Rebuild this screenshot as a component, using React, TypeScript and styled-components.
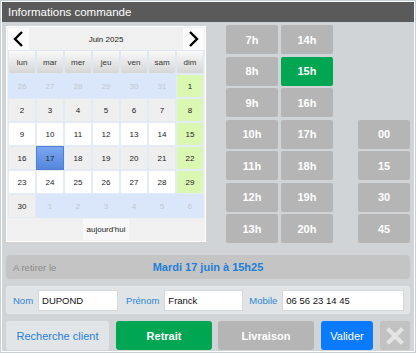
import styled, { createGlobalStyle } from "styled-components";

const GlobalStyle = createGlobalStyle`
  body {
    margin: 0;
    background: #ffffff;
    font-family: "Liberation Sans", Arial, sans-serif;
  }
`;

const Panel = styled.div`
  width: 416px;
  box-sizing: border-box;
  border: 1px solid #c6d0d7;
  padding: 1px;
  background: #ffffff;
`;

const Header = styled.div`
  height: 20px;
  line-height: 20px;
  background: #5a5a5a;
  color: #ffffff;
  font-size: 11.5px;
  padding-left: 6px;
`;

const Body = styled.div`
  background: #d0d4d7;
  padding: 3px 4px 1px 4px;
`;

const Top = styled.div`
  display: flex;
  align-items: flex-start;
`;

const Calendar = styled.div`
  width: 200px;
  box-sizing: border-box;
  margin-top: 1px;
  border: 1px solid #ffffff;
  padding: 1px;
  background: #f0f0f0;
`;

const Nav = styled.div`
  height: 22px;
  display: flex;
  align-items: center;
  justify-content: space-between;
`;

const Arrow = styled.div`
  width: 21px;
  height: 22px;
  background: #fbfbfb;
  display: flex;
  align-items: center;
  justify-content: center;
`;

const Month = styled.div`
  font-size: 8px;
  color: #222;
`;

const Grid = styled.div`
  display: grid;
  grid-template-columns: repeat(7, 28px);
  grid-auto-rows: 24px;
`;

const DayName = styled.div`
  box-sizing: border-box;
  border: 1px solid #dfe8f2;
  background: linear-gradient(#f9f9f9, #d6d6d6);
  font-size: 8px;
  color: #333;
  display: flex;
  align-items: center;
  justify-content: center;
`;

interface CellProps {
  $other?: boolean;
  $sunday?: boolean;
  $alt?: boolean;
  $selected?: boolean;
}

const cellBg = (p: CellProps) => {
  if (p.$selected) return "linear-gradient(#7ba6ef, #5687de)";
  if (p.$other) return "#dae7fb";
  if (p.$sunday) return "#dbf8b3";
  if (p.$alt) return "#efefef";
  return "#ffffff";
};

const Cell = styled.div<CellProps>`
  box-sizing: border-box;
  border: 1px solid
    ${(p) => (p.$selected ? "#4f7fd3" : p.$other ? "#dae7fb" : "#e3ebf5")};
  background: ${(p) => cellBg(p)};
  color: ${(p) => (p.$other ? "#c2c6cc" : "#222")};
  font-size: 8px;
  display: flex;
  align-items: center;
  justify-content: center;
`;

const Foot = styled.div`
  height: 22px;
  display: flex;
  justify-content: center;
  align-items: flex-end;
`;

const TodayBtn = styled.div`
  width: 46px;
  height: 21px;
  background: #f8f8f8;
  font-size: 8px;
  color: #222;
  display: flex;
  align-items: center;
  justify-content: center;
`;

const Times = styled.div`
  margin-left: 20px;
  display: grid;
  grid-template-columns: 52px 52px 19px 52px;
  grid-auto-rows: 29px;
  column-gap: 3px;
  row-gap: 2.5px;
`;

const TimeBtn = styled.div<{ $active?: boolean; $col: number; $row: number }>`
  grid-column: ${(p) => p.$col};
  grid-row: ${(p) => p.$row};
  background: ${(p) => (p.$active ? "#00a651" : "#b5b5b5")};
  border-radius: 2px;
  color: #ffffff;
  font-weight: bold;
  font-size: 11px;
  display: flex;
  align-items: center;
  justify-content: center;
`;

const Summary = styled.div`
  margin-top: 12px;
  height: 24px;
  background: #c4c4c4;
  border-radius: 4px;
  display: grid;
  grid-template-columns: 1fr auto 1fr;
  align-items: center;
  padding: 0 7px;
`;

const SummaryLabel = styled.span`
  font-size: 9.5px;
  color: #8a8a8a;
`;

const SummaryDate = styled.span`
  font-size: 11px;
  font-weight: bold;
  color: #1f7fd9;
`;

const Fields = styled.div`
  margin-top: 7px;
  height: 28px;
  box-sizing: border-box;
  background: #e1e4e6;
  border: 1px solid #e6e8ea;
  border-radius: 3px;
  display: flex;
  align-items: center;
  padding: 0 5px 0 6px;
`;

const Label = styled.span<{ $gap?: number }>`
  font-size: 9.5px;
  color: #2a84d6;
  margin-left: ${(p) => p.$gap ?? 0}px;
  margin-right: 5px;
`;

const Input = styled.div<{ $w?: number }>`
  box-sizing: border-box;
  height: 21px;
  width: ${(p) => (p.$w ? `${p.$w}px` : "auto")};
  flex: ${(p) => (p.$w ? "none" : "1")};
  background: #ffffff;
  border: 1px solid #d6d9db;
  font-size: 9.5px;
  color: #111;
  padding-left: 3px;
  display: flex;
  align-items: center;
`;

const Actions = styled.div`
  margin-top: 7px;
  height: 29px;
  display: flex;
`;

interface BtnProps {
  $w: number;
  $gap?: number;
  $bg: string;
  $color?: string;
  $bold?: boolean;
}

const Button = styled.div<BtnProps>`
  width: ${(p) => p.$w}px;
  margin-left: ${(p) => p.$gap ?? 0}px;
  background: ${(p) => p.$bg};
  color: ${(p) => p.$color ?? "#ffffff"};
  font-weight: ${(p) => (p.$bold ? "bold" : "normal")};
  font-size: 11px;
  border-radius: 3px;
  display: flex;
  align-items: center;
  justify-content: center;
`;

const dayNames = ["lun", "mar", "mer", "jeu", "ven", "sam", "dim"];

const weeks: { d: number; other?: boolean }[][] = [
  [26, 27, 28, 29, 30, 31].map((d) => ({ d, other: true })).concat([{ d: 1 }]),
  [2, 3, 4, 5, 6, 7, 8].map((d) => ({ d })),
  [9, 10, 11, 12, 13, 14, 15].map((d) => ({ d })),
  [16, 17, 18, 19, 20, 21, 22].map((d) => ({ d })),
  [23, 24, 25, 26, 27, 28, 29].map((d) => ({ d })),
  [{ d: 30 }].concat([1, 2, 3, 4, 5, 6].map((d) => ({ d, other: true }))),
];

const hours = [7, 8, 9, 10, 11, 12, 13];
const minutes = ["00", "15", "30", "45"];

function Chevron({ right }: { right?: boolean }) {
  return (
    <svg width="11" height="18" viewBox="0 0 11 18">
      <polyline
        points={right ? "2,2 9,9 2,16" : "9,2 2,9 9,16"}
        fill="none"
        stroke="#000"
        strokeWidth="2.4"
      />
    </svg>
  );
}

export default function App() {
  return (
    <>
      <GlobalStyle />
      <Panel>
        <Header>Informations commande</Header>
        <Body>
          <Top>
            <Calendar>
              <Nav>
                <Arrow>
                  <Chevron />
                </Arrow>
                <Month>Juin 2025</Month>
                <Arrow>
                  <Chevron right />
                </Arrow>
              </Nav>
              <Grid>
                {dayNames.map((n) => (
                  <DayName key={n}>{n}</DayName>
                ))}
                {weeks.map((week, wi) =>
                  week.map((c, ci) => (
                    <Cell
                      key={`${wi}-${ci}`}
                      $other={c.other}
                      $sunday={ci === 6}
                      $alt={wi % 2 === 1}
                      $selected={!c.other && c.d === 17}
                    >
                      {c.d}
                    </Cell>
                  ))
                )}
              </Grid>
              <Foot>
                <TodayBtn>aujourd'hui</TodayBtn>
              </Foot>
            </Calendar>
            <Times>
              {hours.map((h, i) => (
                <TimeBtn key={h} $col={1} $row={i + 1}>
                  {h}h
                </TimeBtn>
              ))}
              {hours.map((h, i) => (
                <TimeBtn key={h + 7} $col={2} $row={i + 1} $active={h + 7 === 15}>
                  {h + 7}h
                </TimeBtn>
              ))}
              {minutes.map((m, i) => (
                <TimeBtn key={m} $col={4} $row={i + 4}>
                  {m}
                </TimeBtn>
              ))}
            </Times>
          </Top>
          <Summary>
            <SummaryLabel>A retirer le</SummaryLabel>
            <SummaryDate>Mardi 17 juin à 15h25</SummaryDate>
            <span />
          </Summary>
          <Fields>
            <Label>Nom</Label>
            <Input $w={80}>DUPOND</Input>
            <Label $gap={8}>Prénom</Label>
            <Input $w={79}>Franck</Input>
            <Label $gap={6}>Mobile</Label>
            <Input>06 56 23 14 45</Input>
          </Fields>
          <Actions>
            <Button $w={103} $bg="#e2e5e7" $color="#1f7fd9">
              Recherche client
            </Button>
            <Button $w={96} $gap={7} $bg="#00a651" $bold>
              Retrait
            </Button>
            <Button $w={96} $gap={6} $bg="#b5b5b5" $bold>
              Livraison
            </Button>
            <Button $w={52} $gap={7} $bg="#0a7bff">
              Valider
            </Button>
            <Button $w={30} $gap={7} $bg="#c2c2c2">
              <svg width="18" height="18" viewBox="0 0 18 18">
                <path
                  d="M3 3 L15 15 M15 3 L3 15"
                  stroke="#e4e4e4"
                  strokeWidth="4"
                  strokeLinecap="square"
                />
              </svg>
            </Button>
          </Actions>
        </Body>
      </Panel>
    </>
  );
}
